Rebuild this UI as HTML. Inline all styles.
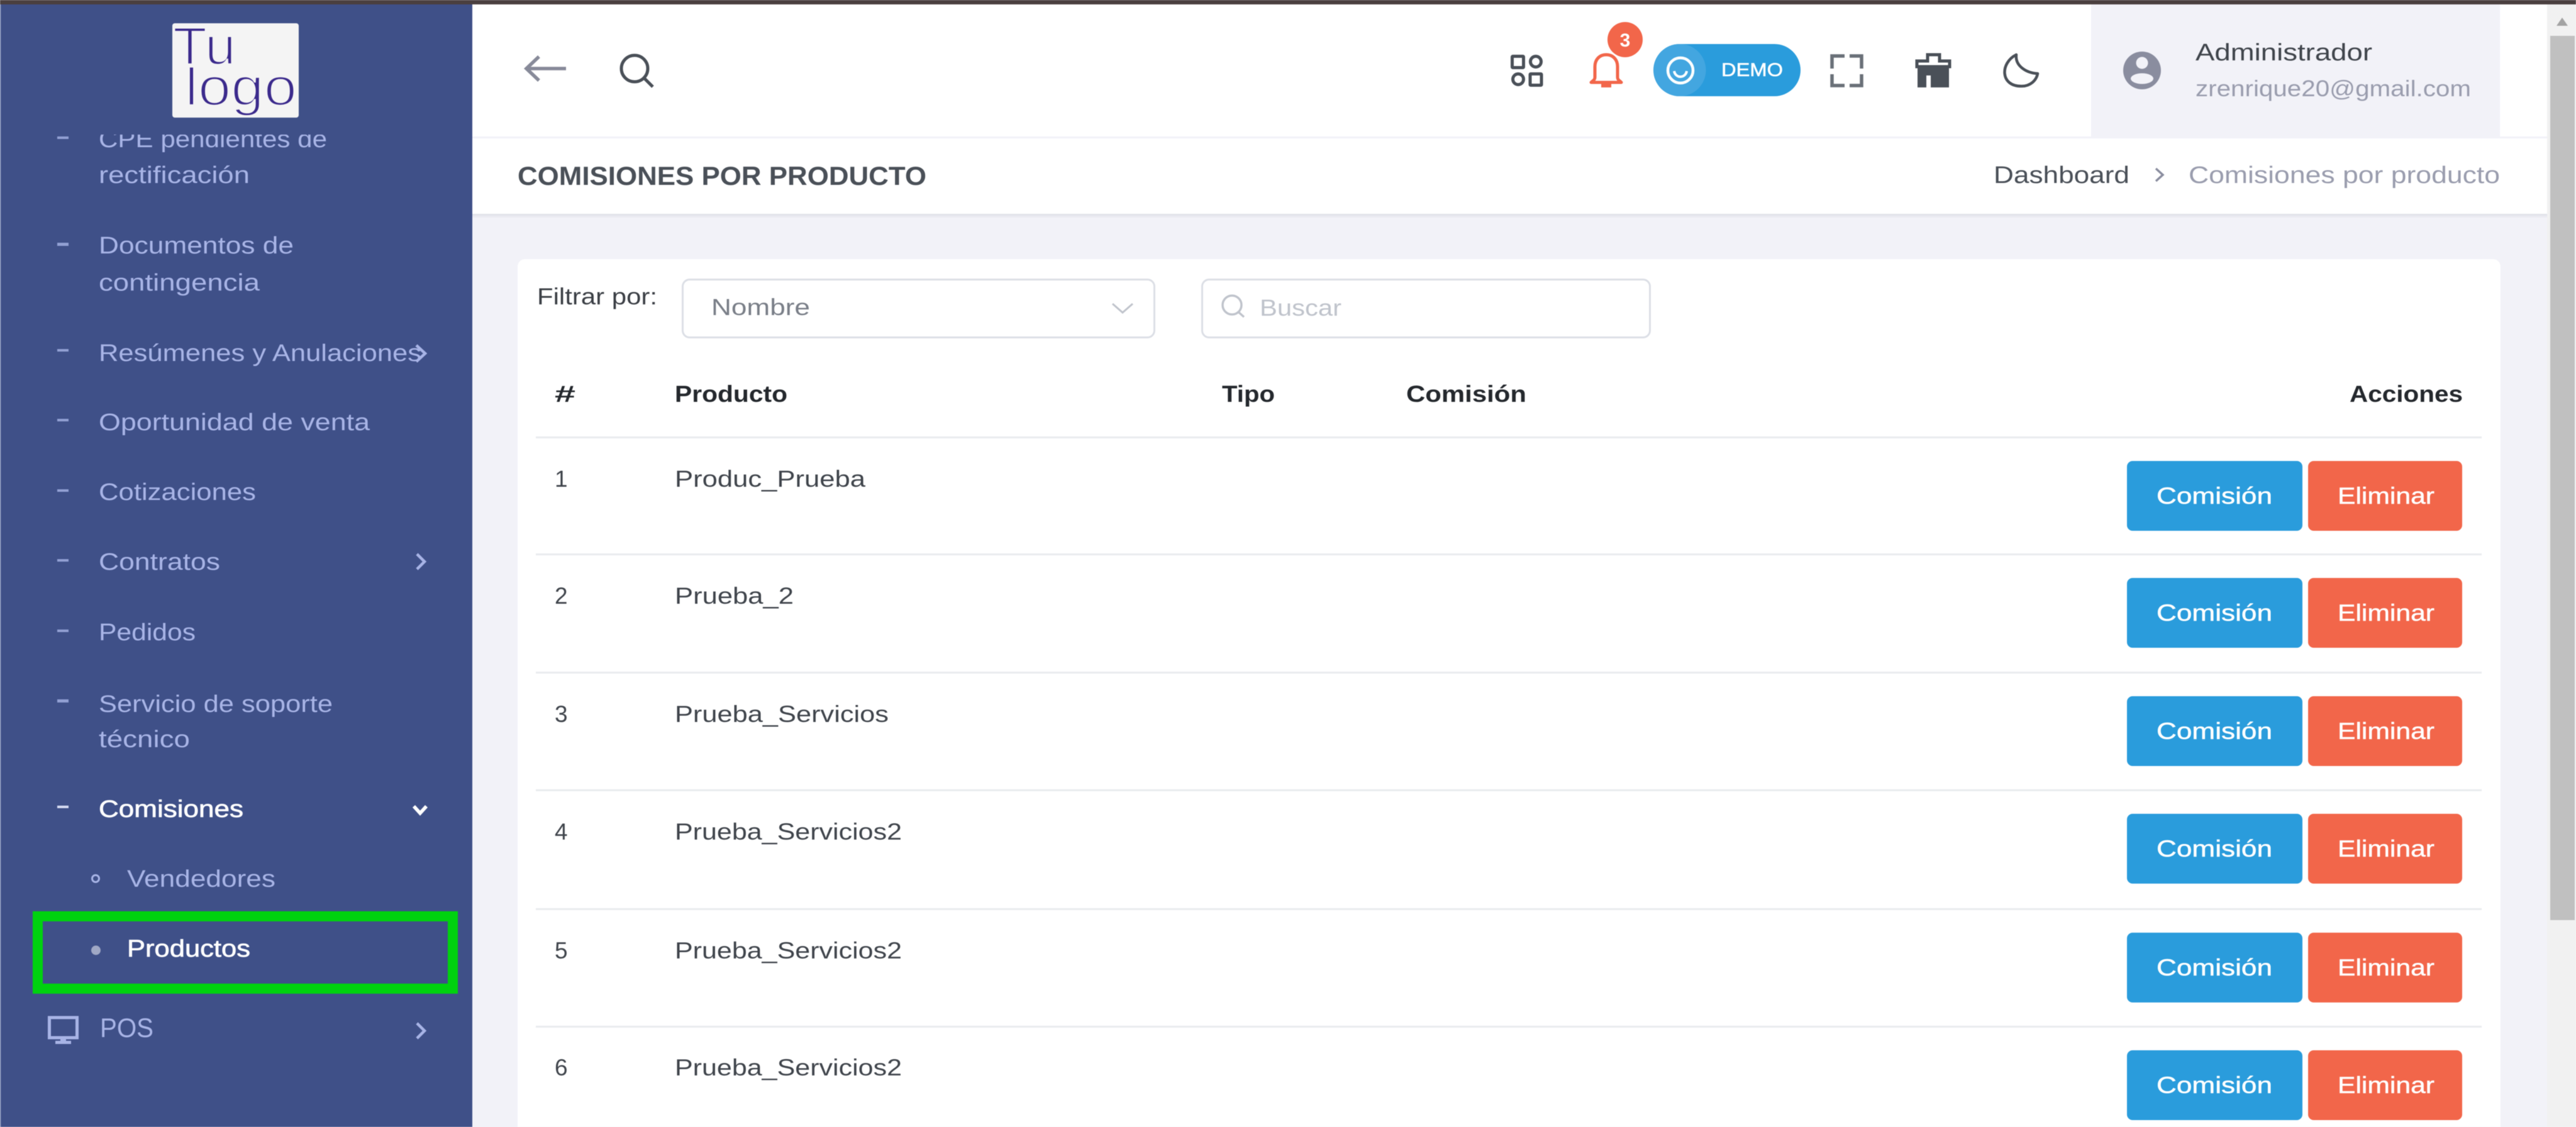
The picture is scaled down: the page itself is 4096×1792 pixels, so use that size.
<!DOCTYPE html>
<html lang="es">
<head>
<meta charset="utf-8">
<title>Comisiones por producto</title>
<style>
html,body{margin:0;padding:0;width:4096px;height:1792px;overflow:hidden;background:#f2f2f8}
svg{display:block;filter:blur(.6px)}
text{font-family:"Liberation Sans",sans-serif;white-space:pre}
.m{font-size:38px;fill:#a8b4e6}
.d{fill:#a8b4e6;opacity:.8}
.h{font-size:37px;font-weight:bold;fill:#24282d}
.c{font-size:37px;fill:#40454c}
.b{font-size:37px;fill:#fff;stroke:#fff;stroke-width:.5px}
</style>
</head>
<body>
<svg width="4096" height="1792" viewBox="0 0 4096 1792" xmlns="http://www.w3.org/2000/svg">
<defs><clipPath id="sc"><rect x="0" y="214" width="751" height="1578"/></clipPath></defs>

<!-- page bg -->
<rect width="4096" height="1792" fill="#f2f2f8"/>
<rect x="751" y="7" width="3299" height="210" fill="#fff"/>
<rect x="751" y="217" width="3299" height="3" fill="#f2f2f8"/>
<rect x="751" y="220" width="3299" height="120" fill="#fff"/>
<rect x="751" y="340" width="3299" height="3" fill="#e2e3ea"/>
<rect x="751" y="343" width="3299" height="3" fill="#ebebf2"/>

<!-- top window edge -->
<rect width="4096" height="7" fill="#4a3f3f"/>

<!-- sidebar -->
<rect x="0" y="7" width="751" height="1785" fill="#3f5088"/>
<rect x="0" y="7" width="1.5" height="1785" fill="#7f8db5"/>
<rect x="274" y="37" width="201" height="150" rx="4" fill="#f4f4f4"/>
<text x="275" y="102" font-size="84" fill="#3b2a8c" stroke="#f4f4f4" stroke-width="2.8" textLength="100" lengthAdjust="spacingAndGlyphs">Tu</text>
<text x="294" y="167" font-size="84" fill="#3b2a8c" stroke="#f4f4f4" stroke-width="2.8" textLength="178" lengthAdjust="spacingAndGlyphs">logo</text>

<g clip-path="url(#sc)">
<rect class="d" x="91" y="217" width="18" height="4"/>
<text class="m" x="157" y="234" textLength="363" lengthAdjust="spacingAndGlyphs">CPE pendientes de</text>
</g>
<text class="m" x="157" y="291" textLength="240" lengthAdjust="spacingAndGlyphs">rectificación</text>

<rect class="d" x="91" y="386" width="18" height="5"/>
<text class="m" x="157" y="403" textLength="310" lengthAdjust="spacingAndGlyphs">Documentos de</text>
<text class="m" x="157" y="462" textLength="256" lengthAdjust="spacingAndGlyphs">contingencia</text>

<rect class="d" x="91" y="555" width="18" height="4"/>
<text class="m" x="157" y="574" textLength="513" lengthAdjust="spacingAndGlyphs">Resúmenes y Anulaciones</text>
<path d="M662 549l14 13-14 13" fill="none" stroke="#a8b4e6" stroke-width="4.5"/>

<rect class="d" x="91" y="666" width="18" height="4"/>
<text class="m" x="157" y="684" textLength="431" lengthAdjust="spacingAndGlyphs">Oportunidad de venta</text>

<rect class="d" x="91" y="778" width="18" height="4"/>
<text class="m" x="157" y="795" textLength="250" lengthAdjust="spacingAndGlyphs">Cotizaciones</text>

<rect class="d" x="91" y="889" width="18" height="4"/>
<text class="m" x="157" y="906" textLength="193" lengthAdjust="spacingAndGlyphs">Contratos</text>
<path d="M663 881l12 12-12 12" fill="none" stroke="#a8b4e6" stroke-width="4.5"/>

<rect class="d" x="91" y="1001" width="18" height="4"/>
<text class="m" x="157" y="1018" textLength="154" lengthAdjust="spacingAndGlyphs">Pedidos</text>

<rect class="d" x="91" y="1112" width="18" height="5"/>
<text class="m" x="157" y="1132" textLength="372" lengthAdjust="spacingAndGlyphs">Servicio de soporte</text>
<text class="m" x="157" y="1188" textLength="145" lengthAdjust="spacingAndGlyphs">técnico</text>

<rect x="91" y="1281" width="18" height="4" fill="#d5dbf2"/>
<text class="m" style="fill:#fff" x="157" y="1299" textLength="230" lengthAdjust="spacingAndGlyphs" stroke="#fff" stroke-width=".7">Comisiones</text>
<path d="M658 1282l10 11 10-11" fill="none" stroke="#fff" stroke-width="5.5"/>

<circle cx="152" cy="1397" r="5.5" fill="none" stroke="#a8b4e6" stroke-width="3"/>
<text class="m" x="202" y="1410" textLength="236" lengthAdjust="spacingAndGlyphs">Vendedores</text>

<rect x="60" y="1457" width="660" height="115" fill="none" stroke="#00d20f" stroke-width="16"/>
<ellipse cx="152.500" cy="1511" rx="7.500" ry="7.500" fill="#a0a8c5"/>
<text class="m" style="fill:#fff" x="202" y="1521" textLength="196" lengthAdjust="spacingAndGlyphs" stroke="#fff" stroke-width=".7">Productos</text>

<rect x="78.500" y="1618" width="44" height="32" fill="none" stroke="#a8b4e6" stroke-width="5"/>
<rect x="96" y="1651" width="9" height="5" fill="#a8b4e6"/>
<rect x="88" y="1655" width="25" height="5" fill="#a8b4e6"/>
<text x="159" y="1649" font-size="43" fill="#a8b4e6" textLength="85" lengthAdjust="spacingAndGlyphs">POS</text>
<path d="M663 1627l12 12-12 12" fill="none" stroke="#a8b4e6" stroke-width="4.5"/>

<!-- header left icons -->
<path d="M900 109H837M857 90l-20 19 20 19" fill="none" stroke="#878a99" stroke-width="5.500"/>
<circle cx="1009" cy="109" r="21" fill="none" stroke="#4a5058" stroke-width="5"/>
<path d="M1025 125l13 13" stroke="#4a5058" stroke-width="5"/>

<!-- grid icon -->
<g fill="none" stroke="#4a5058" stroke-width="5">
<rect x="2404.500" y="89.500" width="18" height="18" rx="1"/>
<circle cx="2442" cy="98" r="8.500"/>
<circle cx="2414" cy="126" r="8.500"/>
<rect x="2433" y="117.500" width="18" height="18" rx="1"/>
</g>

<!-- bell -->
<path d="M2554 87c-11 0-18 8-18 19v17c0 4-3 5-6 8h48c-3-3-6-4-6-8v-17c0-11-7-19-18-19z" fill="none" stroke="#f2664a" stroke-width="5" stroke-linejoin="round"/>
<rect x="2546" y="133" width="16" height="6" fill="#f2664a"/>
<circle cx="2584" cy="63" r="28" fill="#f2664a"/>
<text x="2584" y="74" font-size="30" font-weight="bold" fill="#fff" text-anchor="middle">3</text>

<!-- demo pill -->
<rect x="2629" y="70" width="234" height="83" rx="41.500" fill="#2a9cdc"/>
<circle cx="2671" cy="111.500" r="41.500" fill="#43a6e0"/>
<circle cx="2672" cy="112" r="20" fill="none" stroke="#fff" stroke-width="4.500"/>
<path d="M2662 113c2 12 18 12 20 0" fill="none" stroke="#fff" stroke-width="4"/>
<text x="2737" y="121" font-size="30" fill="#fff" stroke="#fff" stroke-width=".6" textLength="98" lengthAdjust="spacingAndGlyphs">DEMO</text>

<!-- fullscreen -->
<path d="M2913 109V89h20M2941 89h19v20M2960 118v18h-19M2933 136h-20v-18" fill="none" stroke="#6a7078" stroke-width="5.500"/>

<!-- briefcase/gift -->
<path d="M3048 106V97h17V87h19v10h16v9z" fill="none" stroke="#4a5058" stroke-width="5"/>
<path d="M3049 108H3099V139H3070V120H3063V139H3049z" fill="#4a5058"/>

<!-- moon -->
<path d="M3206 87C3180 100 3180 138 3215 137C3228 137 3238 128 3240 117C3222 116 3204 105 3206 87Z" fill="none" stroke="#4a5058" stroke-width="4.500" stroke-linejoin="round"/>

<!-- user panel -->
<rect x="3325" y="7" width="650" height="210" fill="#f2f2f8"/>
<circle cx="3406" cy="112" r="30" fill="#8a8d9f"/>
<circle cx="3406" cy="100" r="9.500" fill="#f2f2f8"/>
<ellipse cx="3406" cy="125" rx="18" ry="8.500" fill="#f2f2f8"/>
<text x="3491" y="96" font-size="38" fill="#40454c" textLength="281" lengthAdjust="spacingAndGlyphs">Administrador</text>
<text x="3491" y="153" font-size="36" fill="#9a9dae" textLength="438" lengthAdjust="spacingAndGlyphs">zrenrique20@gmail.com</text>

<!-- breadcrumb bar -->
<text x="823" y="294" font-size="42" font-weight="bold" fill="#4a5058" textLength="650" lengthAdjust="spacingAndGlyphs">COMISIONES POR PRODUCTO</text>
<text x="3170" y="291" font-size="38" fill="#4a5058" textLength="216" lengthAdjust="spacingAndGlyphs">Dashboard</text>
<path d="M3428 268l11 10-11 10" fill="none" stroke="#8a8d9f" stroke-width="3.500"/>
<text x="3480" y="291" font-size="38" fill="#9a9dae" textLength="495" lengthAdjust="spacingAndGlyphs">Comisiones por producto</text>

<!-- card -->
<rect x="823" y="412" width="3153" height="1400" rx="12" fill="#fff"/>
<text x="854" y="484" font-size="37" fill="#3b3f45" textLength="191" lengthAdjust="spacingAndGlyphs">Filtrar por:</text>
<rect x="1085.500" y="444.500" width="750" height="92" rx="11" fill="#fff" stroke="#dcdfe6" stroke-width="3"/>
<text x="1131" y="501" font-size="37" fill="#7a7f88" textLength="157" lengthAdjust="spacingAndGlyphs">Nombre</text>
<path d="M1769 483l16 14 16-14" fill="none" stroke="#c0c4cc" stroke-width="3"/>
<rect x="1911.500" y="444.500" width="712" height="92" rx="11" fill="#fff" stroke="#dcdfe6" stroke-width="3"/>
<circle cx="1959" cy="485" r="15" fill="none" stroke="#c0c4cc" stroke-width="3.500"/>
<path d="M1969 496l9 8" stroke="#c0c4cc" stroke-width="3.500"/>
<text x="2003" y="502" font-size="37" fill="#c0c4cc" textLength="130" lengthAdjust="spacingAndGlyphs">Buscar</text>

<!-- table head -->
<text class="h" x="882" y="639" textLength="33" lengthAdjust="spacingAndGlyphs">#</text>
<text class="h" x="1073" y="639" textLength="179" lengthAdjust="spacingAndGlyphs">Producto</text>
<text class="h" x="1943" y="639" textLength="84" lengthAdjust="spacingAndGlyphs">Tipo</text>
<text class="h" x="2236" y="639" textLength="191" lengthAdjust="spacingAndGlyphs">Comisión</text>
<text class="h" x="3736" y="639" textLength="180" lengthAdjust="spacingAndGlyphs">Acciones</text>

<!-- row separators -->
<g fill="#e9ebee">
<rect x="852" y="694" width="3094" height="3"/>
<rect x="852" y="880" width="3094" height="3"/>
<rect x="852" y="1068" width="3094" height="3"/>
<rect x="852" y="1255" width="3094" height="3"/>
<rect x="852" y="1444" width="3094" height="3"/>
<rect x="852" y="1631" width="3094" height="3"/>
</g>

<!-- rows -->
<text class="c" x="882" y="774">1</text>
<text class="c" x="1073" y="774" textLength="303" lengthAdjust="spacingAndGlyphs">Produc_Prueba</text>
<text class="c" x="882" y="960">2</text>
<text class="c" x="1073" y="960" textLength="189" lengthAdjust="spacingAndGlyphs">Prueba_2</text>
<text class="c" x="882" y="1148">3</text>
<text class="c" x="1073" y="1148" textLength="340" lengthAdjust="spacingAndGlyphs">Prueba_Servicios</text>
<text class="c" x="882" y="1335">4</text>
<text class="c" x="1073" y="1335" textLength="361" lengthAdjust="spacingAndGlyphs">Prueba_Servicios2</text>
<text class="c" x="882" y="1524">5</text>
<text class="c" x="1073" y="1524" textLength="361" lengthAdjust="spacingAndGlyphs">Prueba_Servicios2</text>
<text class="c" x="882" y="1710">6</text>
<text class="c" x="1073" y="1710" textLength="361" lengthAdjust="spacingAndGlyphs">Prueba_Servicios2</text>

<!-- buttons -->
<g>
<rect x="3382" y="733" width="279" height="111" rx="9" fill="#2a9cdc"/><rect x="3670" y="733" width="245" height="111" rx="9" fill="#f2664a"/>
<text class="b" x="3429" y="801" textLength="184" lengthAdjust="spacingAndGlyphs">Comisión</text><text class="b" x="3717" y="801" textLength="154" lengthAdjust="spacingAndGlyphs">Eliminar</text>

<rect x="3382" y="919" width="279" height="111" rx="9" fill="#2a9cdc"/><rect x="3670" y="919" width="245" height="111" rx="9" fill="#f2664a"/>
<text class="b" x="3429" y="987" textLength="184" lengthAdjust="spacingAndGlyphs">Comisión</text><text class="b" x="3717" y="987" textLength="154" lengthAdjust="spacingAndGlyphs">Eliminar</text>

<rect x="3382" y="1107" width="279" height="111" rx="9" fill="#2a9cdc"/><rect x="3670" y="1107" width="245" height="111" rx="9" fill="#f2664a"/>
<text class="b" x="3429" y="1175" textLength="184" lengthAdjust="spacingAndGlyphs">Comisión</text><text class="b" x="3717" y="1175" textLength="154" lengthAdjust="spacingAndGlyphs">Eliminar</text>

<rect x="3382" y="1294" width="279" height="111" rx="9" fill="#2a9cdc"/><rect x="3670" y="1294" width="245" height="111" rx="9" fill="#f2664a"/>
<text class="b" x="3429" y="1362" textLength="184" lengthAdjust="spacingAndGlyphs">Comisión</text><text class="b" x="3717" y="1362" textLength="154" lengthAdjust="spacingAndGlyphs">Eliminar</text>

<rect x="3382" y="1483" width="279" height="111" rx="9" fill="#2a9cdc"/><rect x="3670" y="1483" width="245" height="111" rx="9" fill="#f2664a"/>
<text class="b" x="3429" y="1551" textLength="184" lengthAdjust="spacingAndGlyphs">Comisión</text><text class="b" x="3717" y="1551" textLength="154" lengthAdjust="spacingAndGlyphs">Eliminar</text>

<rect x="3382" y="1670" width="279" height="111" rx="9" fill="#2a9cdc"/><rect x="3670" y="1670" width="245" height="111" rx="9" fill="#f2664a"/>
<text class="b" x="3429" y="1738" textLength="184" lengthAdjust="spacingAndGlyphs">Comisión</text><text class="b" x="3717" y="1738" textLength="154" lengthAdjust="spacingAndGlyphs">Eliminar</text>
</g>

<!-- scrollbar -->
<rect x="4050" y="7" width="46" height="1785" fill="#f1f1f1"/>
<rect x="4055" y="57" width="39" height="1406" fill="#c0c0c0"/>
<path d="M4074 28l-9 13h18z" fill="#a3a3a3"/>
</svg>
</body>
</html>
